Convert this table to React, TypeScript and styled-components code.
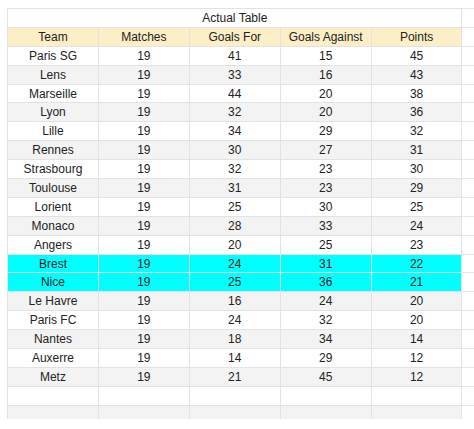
import React from 'react'
import styled, { createGlobalStyle } from 'styled-components'

const GlobalStyle = createGlobalStyle`
  html, body {
    margin: 0;
    padding: 0;
    background: #ffffff;
  }
  body {
    font-family: 'Liberation Sans', Arial, sans-serif;
    overflow: hidden;
  }
`

const Page = styled.div`
  width: 474px;
  height: 429px;
  padding: 8px 0 0 7px;
  box-sizing: border-box;
  overflow: hidden;
`

// the sheet is cut off partway through the last blank row
const Viewport = styled.div`
  height: 411px;
  overflow: hidden;
`

const Sheet = styled.table`
  border-collapse: collapse;
  table-layout: fixed;
  font-size: 12px;
  color: #222222;
`

const Col = styled.col<{ $w: number }>`
  width: ${(p) => p.$w}px;
`

const Row = styled.tr<{ $bg: string }>`
  height: 18.9px;
  background: ${(p) => p.$bg};
`

const Cell = styled.td`
  border: 1px solid #e2e2e2;
  padding: 0 2px;
  text-align: center;
  vertical-align: middle;
  white-space: nowrap;
  overflow: hidden;
  line-height: 16px;
`

const Spare = styled.td`
  border-top: 1px solid #e6e6e6;
  border-bottom: 1px solid #e6e6e6;
  border-left: 1px solid #e2e2e2;
  background: #ffffff;
`

const TitleCell = styled(Cell)`
  background: #ffffff;
`

type Team = [string, number, number, number, number]

const teams: Team[] = [
  ['Paris SG', 19, 41, 15, 45],
  ['Lens', 19, 33, 16, 43],
  ['Marseille', 19, 44, 20, 38],
  ['Lyon', 19, 32, 20, 36],
  ['Lille', 19, 34, 29, 32],
  ['Rennes', 19, 30, 27, 31],
  ['Strasbourg', 19, 32, 23, 30],
  ['Toulouse', 19, 31, 23, 29],
  ['Lorient', 19, 25, 30, 25],
  ['Monaco', 19, 28, 33, 24],
  ['Angers', 19, 20, 25, 23],
  ['Brest', 19, 24, 31, 22],
  ['Nice', 19, 25, 36, 21],
  ['Le Havre', 19, 16, 24, 20],
  ['Paris FC', 19, 24, 32, 20],
  ['Nantes', 19, 18, 34, 14],
  ['Auxerre', 19, 14, 29, 12],
  ['Metz', 19, 21, 45, 12],
]

const highlighted = ['Brest', 'Nice']
const headers = ['Team', 'Matches', 'Goals For', 'Goals Against', 'Points']

const rowColor = (i: number, name?: string) => {
  if (name && highlighted.includes(name)) return '#00ffff'
  return i % 2 === 0 ? '#ffffff' : '#f3f3f3'
}

const App: React.FC = () => {
  const blanks = [teams.length, teams.length + 1]
  return (
    <Page>
      <GlobalStyle />
      <Viewport>
        <Sheet>
          <colgroup>
            {headers.map((h) => (
              <Col key={h} $w={91} />
            ))}
            <Col $w={12} />
          </colgroup>
          <tbody>
            <Row $bg="#ffffff">
              <TitleCell colSpan={5}>Actual Table</TitleCell>
              <Spare />
            </Row>
            <Row $bg="#fcefc7">
              {headers.map((h) => (
                <Cell key={h}>{h}</Cell>
              ))}
              <Spare />
            </Row>
            {teams.map((t, i) => (
              <Row key={t[0]} $bg={rowColor(i, t[0])}>
                {t.map((v, j) => (
                  <Cell key={j}>{v}</Cell>
                ))}
                <Spare />
              </Row>
            ))}
            {blanks.map((i) => (
              <Row key={i} $bg={rowColor(i)}>
                {headers.map((h) => (
                  <Cell key={h} />
                ))}
                <Spare />
              </Row>
            ))}
          </tbody>
        </Sheet>
      </Viewport>
    </Page>
  )
}

export default App
